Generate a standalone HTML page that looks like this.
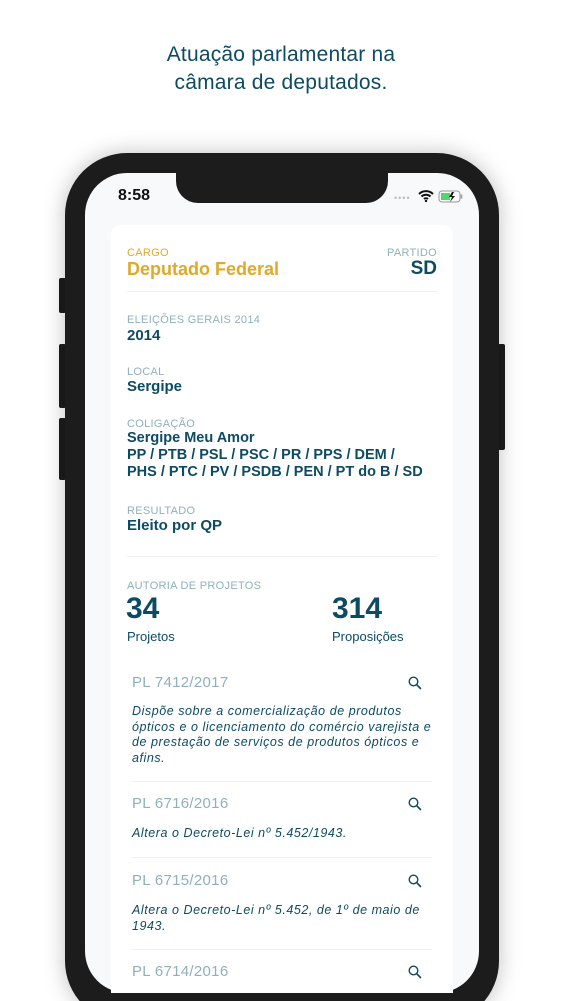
<!DOCTYPE html>
<html><head><meta charset="utf-8"><style>
*{margin:0;padding:0;box-sizing:border-box}
html,body{width:562px;height:1001px;overflow:hidden}
body{background:#fff;position:relative;font-family:"Liberation Sans",sans-serif;color:#0d4a63}
.a{position:absolute;white-space:nowrap}
.title{left:0;width:562px;top:41px;text-align:center;font-size:21px;line-height:28px;color:#0d4a63;white-space:normal;letter-spacing:.2px}
.frame{left:65px;top:153px;width:434px;height:870px;background:#1c1c1c;border-radius:62px;box-shadow:0 0 22px rgba(0,0,0,.25)}
.screen{left:85px;top:173px;width:394px;height:820px;background:#f8f9fb;border-radius:42px;overflow:hidden}
.notch{left:176px;top:173px;width:212px;height:30px;background:#1c1c1c;border-radius:0 0 22px 22px}
.btn{background:#1c1c1c;border-radius:2px}
.card{left:111px;top:225px;width:342px;height:768px;background:#fff;border-radius:10px 10px 0 0}
.lab{font-size:11px;color:#8fb0bd;letter-spacing:.3px}
.val{font-size:15px;font-weight:bold;color:#0d4a63}
.pl{font-size:15px;color:#8fb0bd;letter-spacing:.3px}
.desc{font-size:12.5px;font-style:italic;color:#0d4a63;line-height:15.5px;white-space:normal;width:300px;letter-spacing:.55px}
.hr{height:1px;background:#eef1f3}
</style></head><body>
<div class="a title">Atuação parlamentar na<br>câmara de deputados.</div>
<div class="a btn" style="left:59px;top:278px;width:7px;height:35px"></div>
<div class="a btn" style="left:59px;top:344px;width:7px;height:64px"></div>
<div class="a btn" style="left:59px;top:418px;width:7px;height:62px"></div>
<div class="a btn" style="left:498px;top:344px;width:7px;height:106px"></div>
<div class="a frame"></div>
<div class="a screen"></div>
<div class="a notch"></div>
<div class="a" style="left:118px;top:187px;font-size:16px;font-weight:bold;color:#111">8:58</div>
<div class="a" style="left:394px;top:193px;font-size:9px;color:#bbb;letter-spacing:1px">••••</div>
<svg class="a" style="left:418px;top:190px" width="16" height="12" viewBox="0 0 16 12"><path d="M1 4a10 10 0 0 1 14 0M3.5 6.5a6.5 6.5 0 0 1 9 0M6 9a3 3 0 0 1 4 0" stroke="#111" stroke-width="2" fill="none"/><circle cx="8" cy="11" r="1.2" fill="#111"/></svg>
<svg class="a" style="left:438px;top:190px" width="26" height="13" viewBox="0 0 26 13"><rect x="1" y="1" width="21" height="11" rx="3" fill="none" stroke="#999"/><rect x="3" y="3" width="9" height="7" fill="#4cd964"/><path d="M23.5 4.5v4" stroke="#999" stroke-width="1.5"/><path d="M14 2l-3 5h3l-2 5 5-6h-3l2-4z" fill="#111"/></svg>
<div class="a card"></div>
<div class="a lab" style="left:127px;top:247px;color:#e0a928">CARGO</div>
<div class="a" style="left:127px;top:259px;font-size:18px;font-weight:bold;color:#e0a928">Deputado Federal</div>
<div class="a lab" style="right:125px;top:247px">PARTIDO</div>
<div class="a" style="right:125px;top:258px;font-size:19px;font-weight:bold">SD</div>
<div class="a hr" style="left:127px;top:291px;width:310px"></div>
<div class="a lab" style="left:127px;top:314px">ELEIÇÕES GERAIS 2014</div>
<div class="a val" style="left:127px;top:327px">2014</div>
<div class="a lab" style="left:127px;top:366px">LOCAL</div>
<div class="a val" style="left:127px;top:378px">Sergipe</div>
<div class="a lab" style="left:127px;top:418px">COLIGAÇÃO</div>
<div class="a val" style="left:127px;top:430px;line-height:17px;font-size:14.5px">Sergipe Meu Amor<br>PP / PTB / PSL / PSC / PR / PPS / DEM /<br>PHS / PTC / PV / PSDB / PEN / PT do B / SD</div>
<div class="a lab" style="left:127px;top:505px">RESULTADO</div>
<div class="a val" style="left:127px;top:517px">Eleito por QP</div>
<div class="a hr" style="left:127px;top:556px;width:310px"></div>
<div class="a lab" style="left:127px;top:580px">AUTORIA DE PROJETOS</div>
<div class="a" style="left:126px;top:592px;font-size:30px;font-weight:bold">34</div>
<div class="a" style="left:127px;top:629px;font-size:13px">Projetos</div>
<div class="a" style="left:332px;top:592px;font-size:30px;font-weight:bold">314</div>
<div class="a" style="left:332px;top:629px;font-size:13px">Proposições</div>

<div class="a pl" style="left:132px;top:674px">PL 7412/2017</div>
<div class="a desc" style="left:132px;top:704px">Dispõe sobre a comercialização de produtos ópticos e o licenciamento do comércio varejista e de prestação de serviços de produtos ópticos e afins.</div>
<div class="a hr" style="left:132px;top:781px;width:300px"></div>
<div class="a pl" style="left:132px;top:795px">PL 6716/2016</div>
<div class="a desc" style="left:132px;top:826px">Altera o Decreto-Lei nº 5.452/1943.</div>
<div class="a hr" style="left:132px;top:857px;width:300px"></div>
<div class="a pl" style="left:132px;top:872px">PL 6715/2016</div>
<div class="a desc" style="left:132px;top:903px">Altera o Decreto-Lei nº 5.452, de 1º de maio de 1943.</div>
<div class="a hr" style="left:132px;top:949px;width:300px"></div>
<div class="a pl" style="left:132px;top:963px">PL 6714/2016</div>
<svg class="a" style="left:408px;top:676px" width="14" height="14" viewBox="0 0 14 14"><circle cx="5.5" cy="5.5" r="4.3" fill="none" stroke="#0d4a63" stroke-width="1.4"/><path d="M8.7 8.7l3.8 3.8" stroke="#0d4a63" stroke-width="1.6" stroke-linecap="round"/></svg>
<svg class="a" style="left:408px;top:797px" width="14" height="14" viewBox="0 0 14 14"><circle cx="5.5" cy="5.5" r="4.3" fill="none" stroke="#0d4a63" stroke-width="1.4"/><path d="M8.7 8.7l3.8 3.8" stroke="#0d4a63" stroke-width="1.6" stroke-linecap="round"/></svg>
<svg class="a" style="left:408px;top:874px" width="14" height="14" viewBox="0 0 14 14"><circle cx="5.5" cy="5.5" r="4.3" fill="none" stroke="#0d4a63" stroke-width="1.4"/><path d="M8.7 8.7l3.8 3.8" stroke="#0d4a63" stroke-width="1.6" stroke-linecap="round"/></svg>
<svg class="a" style="left:408px;top:965px" width="14" height="14" viewBox="0 0 14 14"><circle cx="5.5" cy="5.5" r="4.3" fill="none" stroke="#0d4a63" stroke-width="1.4"/><path d="M8.7 8.7l3.8 3.8" stroke="#0d4a63" stroke-width="1.6" stroke-linecap="round"/></svg>
</body></html>
